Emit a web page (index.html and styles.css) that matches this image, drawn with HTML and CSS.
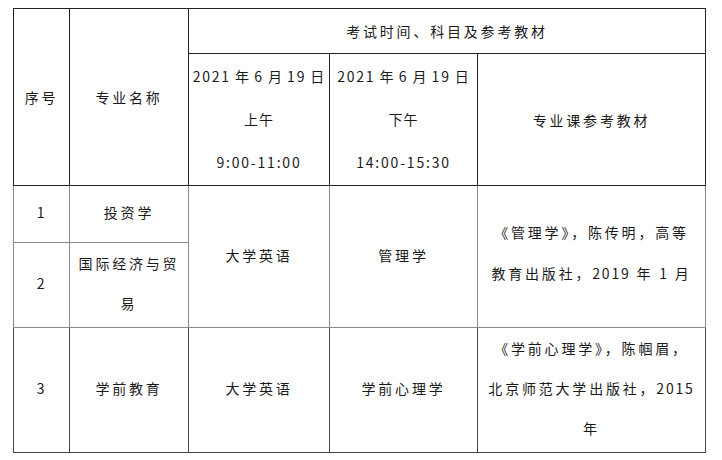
FILE: index.html
```html
<!DOCTYPE html>
<html lang="zh-CN">
<head>
<meta charset="utf-8">
<title>考试时间、科目及参考教材</title>
<link rel="stylesheet" href="styles.css">
</head>
<body>
<table class="exam">
  <colgroup>
    <col class="c1"><col class="c2"><col class="c3"><col class="c4"><col class="c5">
  </colgroup>
  <thead>
    <tr class="h1">
      <th rowspan="2" class="dark">序号</th>
      <th rowspan="2" class="dark">专业名称</th>
      <th colspan="3" class="dark">考试时间、科目及参考教材</th>
    </tr>
    <tr class="h2">
      <th class="dark time"><span class="num">2021</span> 年 <span class="num">6</span> 月 <span class="num">19</span> 日<br>上午<br><span class="num">9:00-11:00</span></th>
      <th class="dark time"><span class="num">2021</span> 年 <span class="num">6</span> 月 <span class="num">19</span> 日<br>下午<br><span class="num">14:00-15:30</span></th>
      <th class="dark">专业课参考教材</th>
    </tr>
  </thead>
  <tbody>
    <tr class="r1">
      <td class="grey"><span class="num">1</span></td>
      <td class="grey">投资学</td>
      <td rowspan="2" class="grey">大学英语</td>
      <td rowspan="2" class="grey">管理学</td>
      <td rowspan="2" class="grey book">《管理学》，陈传明，高等<br>教育出版社，<span class="num">2019</span> 年 <span class="num">1</span> 月</td>
    </tr>
    <tr class="r2">
      <td class="grey"><span class="num">2</span></td>
      <td class="grey">国际经济与贸<br>易</td>
    </tr>
    <tr class="r3">
      <td class="mid"><span class="num">3</span></td>
      <td class="mid">学前教育</td>
      <td class="mid">大学英语</td>
      <td class="mid">学前心理学</td>
      <td class="mid book">《学前心理学》，陈帼眉，<br>北京师范大学出版社，<span class="num">2015</span><br>年</td>
    </tr>
  </tbody>
</table>
</body>
</html>
```

FILE: styles.css
```css
html, body {
  margin: 0;
  padding: 0;
  background: #ffffff;
}

body {
  font-family: "Noto Sans CJK SC", "Noto Sans", sans-serif;
  font-size: 14px;
  color: #1a1a1a;
}

.exam {
  margin: 8px 0 0 13px;
  border-collapse: collapse;
  table-layout: fixed;
  width: 692px;
  border: 1px solid #333333;
}

.c1 { width: 56px; }
.c2 { width: 119px; }
.c3 { width: 141px; }
.c4 { width: 148px; }
.c5 { width: 228px; }

th, td {
  padding: 0;
  text-align: center;
  vertical-align: middle;
  font-weight: 400;
  letter-spacing: 2.8px;
  line-height: 40px;
  white-space: nowrap;
}

td {
  padding-bottom: 4px;
}

.num {
  letter-spacing: 1.8px;
}

.dark { border: 1px solid #222222; }
.grey { border: 1px solid #8a8a8a; }
.mid  { border: 1px solid #444444; border-top-color: #9a9a9a; }

.h1 { height: 45px; }
.h2 { height: 132px; }
.r1 { height: 57px; }
.r2 { height: 85px; }
.r3 { height: 124px; }

.time {
  line-height: 43px;
  letter-spacing: 1px;
}

td.book {
  line-height: 41px;
  padding-bottom: 8px;
}

.r3 td.book {
  line-height: 40px;
  padding-bottom: 4px;
}
```
